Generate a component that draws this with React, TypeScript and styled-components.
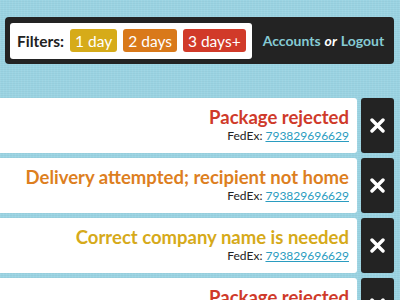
import styled, { createGlobalStyle } from "styled-components";

const GlobalStyle = createGlobalStyle`
  html, body {
    margin: 0;
    padding: 0;
  }
  body {
    width: 400px;
    height: 300px;
    overflow: hidden;
    background-color: #9bd4e3;
    background-image:
      repeating-linear-gradient(90deg, rgba(255,255,255,.06) 0 1px, transparent 1px 3px),
      repeating-linear-gradient(0deg, rgba(0,0,0,.03) 0 1px, transparent 1px 2px);
    font-family: Lato, "Open Sans", sans-serif;
  }
`;

const Page = styled.div`
  height: 300px;
  padding-top: 17px;
  box-sizing: border-box;
  overflow: hidden;
`;

const TopBar = styled.div`
  display: flex;
  align-items: center;
  height: 47px;
  margin: 0 6px 0 5px;
  padding: 0 5px;
  box-sizing: border-box;
  background: #232323;
  border-radius: 4px;
`;

const FilterBox = styled.div`
  flex-shrink: 0;
  display: flex;
  align-items: center;
  gap: 6px;
  height: 36px;
  padding: 0 6px 0 7px;
  background: #fff;
  border-radius: 3px;
`;

const FilterLabel = styled.span`
  font-size: 15.5px;
  font-weight: 700;
  color: #222;
`;

const Badge = styled.span<{ $color: string }>`
  display: inline-flex;
  align-items: center;
  height: 23px;
  padding: 0 5px;
  border-radius: 3px;
  background: ${(p) => p.$color};
  color: #fff;
  font-size: 15.5px;
  white-space: nowrap;
`;

const Account = styled.div`
  margin-left: 11px;
  font-size: 14px;
  font-weight: 700;
  color: #fff;
  white-space: nowrap;

  a {
    color: #86cad3;
    text-decoration: none;
  }

  em {
    margin: 0 4px;
  }
`;

const List = styled.div`
  display: flex;
  flex-direction: column;
  gap: 5px;
  margin-top: 34px;
`;

const Row = styled.div`
  display: flex;
  flex-shrink: 0;
  gap: 4px;
  height: 55px;
  margin-right: 6px;
`;

const Card = styled.div`
  flex: 1;
  display: flex;
  flex-direction: column;
  align-items: flex-end;
  padding: 8px 8px 0 0;
  background: #fff;
  border-radius: 0 3px 3px 0;
`;

const Title = styled.div<{ $color: string }>`
  font-size: 18.5px;
  line-height: 22px;
  font-weight: 700;
  color: ${(p) => p.$color};
  white-space: nowrap;
`;

const Tracking = styled.div`
  margin-top: 1px;
  font-size: 12px;
  line-height: 14px;
  color: #222;

  a {
    color: #2a9cc0;
    text-decoration: underline;
  }
`;

const Close = styled.button`
  display: flex;
  align-items: center;
  justify-content: center;
  width: 33px;
  padding: 0;
  border: 0;
  border-radius: 3px;
  background: #232323;
  cursor: pointer;
`;

const alerts = [
  { title: "Package rejected", color: "#cf3a2a" },
  { title: "Delivery attempted; recipient not home", color: "#dd7f1f" },
  { title: "Correct company name is needed", color: "#d6aa1a" },
  { title: "Package rejected", color: "#cf3a2a" },
];

function CloseIcon() {
  return (
    <svg width="15" height="15" viewBox="0 0 15 15">
      <path d="M2 2 L13 13 M13 2 L2 13" stroke="#fff" strokeWidth="3.4" strokeLinecap="round" />
    </svg>
  );
}

export default function App() {
  return (
    <>
      <GlobalStyle />
      <Page>
        <TopBar>
          <FilterBox>
            <FilterLabel>Filters:</FilterLabel>
            <Badge $color="#d6ab19">1 day</Badge>
            <Badge $color="#d9791a">2 days</Badge>
            <Badge $color="#d13a29">3 days+</Badge>
          </FilterBox>
          <Account>
            <a href="#">Accounts</a>
            <em>or</em>
            <a href="#">Logout</a>
          </Account>
        </TopBar>
        <List>
          {alerts.map((a, i) => (
            <Row key={i}>
              <Card>
                <Title $color={a.color}>{a.title}</Title>
                <Tracking>
                  FedEx: <a href="#">793829696629</a>
                </Tracking>
              </Card>
              <Close aria-label="Dismiss">
                <CloseIcon />
              </Close>
            </Row>
          ))}
        </List>
      </Page>
    </>
  );
}
